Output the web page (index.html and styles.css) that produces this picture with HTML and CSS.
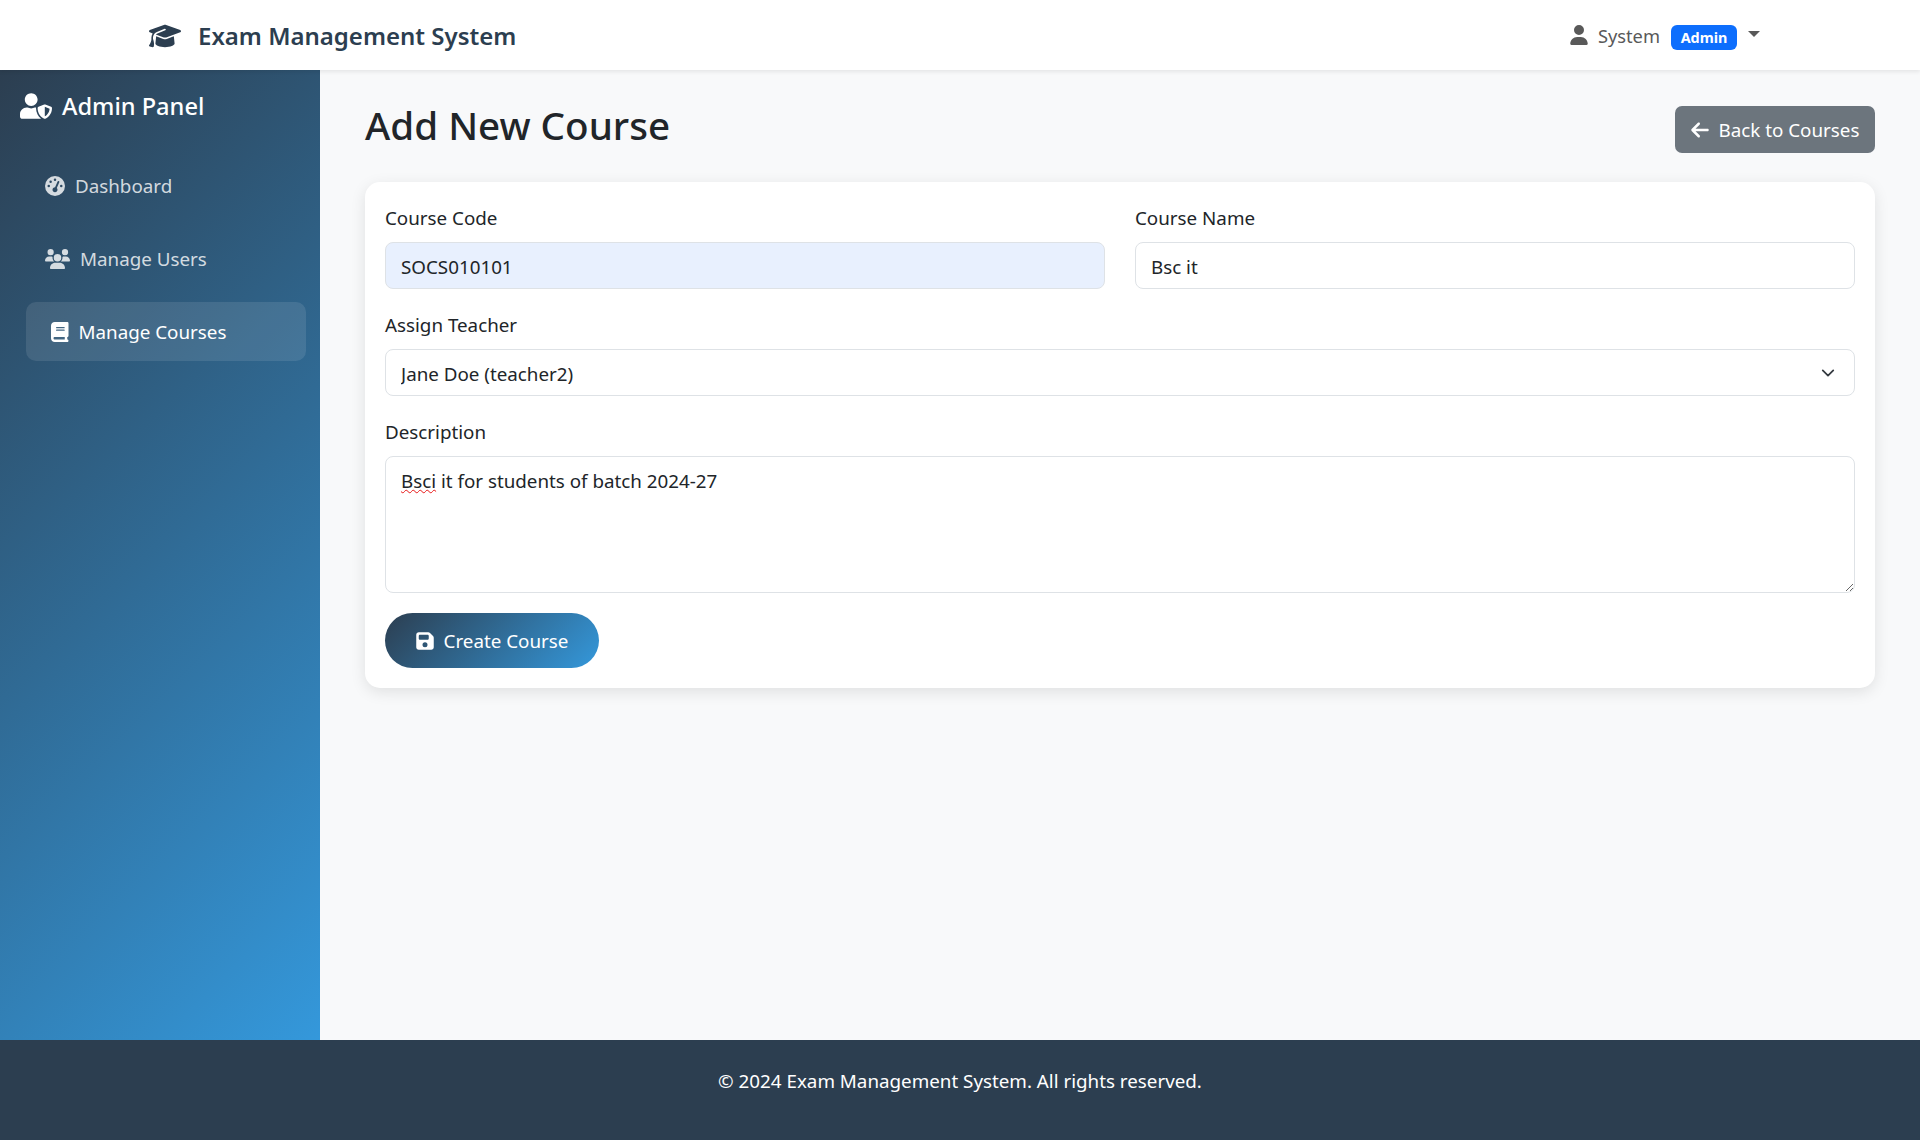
FILE: index.html
```html
<!DOCTYPE html>
<html>
  <head>
    <title>Add New Course</title>
    <link rel="stylesheet" href="styles.css">
  </head>
  <body>
    <nav class="navbar">
      <a class="brand" href="#">
        <svg class="brand-icon" viewBox="0 0 640 512"><path d="M320 32c-8.1 0-16.1 1.4-23.7 4.1L15.8 137.4C6.3 140.9 0 149.9 0 160s6.3 19.1 15.8 22.6l57.9 20.9C57.3 229.3 48 259.8 48 291.9v28.1c0 28.4-10.8 57.7-22.3 80.8c-6.5 13-13.9 25.8-22.5 37.6C0 442.7-.9 448.3 .9 453.4s6 8.9 11.2 10.2l64 16c4.2 1.1 8.7 .3 12.4-2s6.3-6.1 7.1-10.4c8.6-42.8 4.3-81.2-2.1-108.7C90.3 344.3 86 329.8 80 316.5V291.9c0-30.2 10.2-58.7 27.9-81.5c12.9-15.5 29.6-28 49.2-35.7l157-61.7c8.2-3.2 17.5 .8 20.7 9s-.8 17.5-9 20.7l-157 61.7c-12.4 4.9-23.3 12.4-32.2 21.6l159.6 57.6c7.6 2.7 15.6 4.1 23.7 4.1s16.1-1.4 23.7-4.1L624.2 182.6c9.5-3.4 15.8-12.5 15.8-22.6s-6.3-19.1-15.8-22.6L343.7 36.1C336.1 33.4 328.1 32 320 32zM128 408c0 35.3 86 72 192 72s192-36.7 192-72L496.7 262.6 354.5 314c-11.1 4-22.8 6-34.5 6s-23.5-2-34.5-6L143.3 262.6 128 408z"/></svg>
        Exam Management System
      </a>
      <div class="user-menu">
        <svg class="user-icon" viewBox="0 0 448 512"><path d="M224 256A128 128 0 1 0 224 0a128 128 0 1 0 0 256zm-45.7 48C79.8 304 0 383.8 0 482.3C0 498.7 13.3 512 29.7 512H418.3c16.4 0 29.7-13.3 29.7-29.7C448 383.8 368.2 304 269.7 304H178.3z"/></svg>
        <span class="user-name">System</span>
        <span class="badge">Admin</span>
        <span class="caret"></span>
      </div>
    </nav>

    <div class="page">
      <aside class="sidebar">
        <h4 class="sidebar-title">
          <svg class="title-icon" viewBox="0 0 640 512"><path d="M622.3 271.1l-115.2-45c-4.1-1.6-12.6-3.7-22.2 0l-115.2 45c-10.7 4.2-17.7 14-17.7 24.9 0 111.6 68.7 188.8 132.9 213.9 9.6 3.7 18 1.6 22.2 0C558.4 489.9 640 420.5 640 296c0-10.9-7-20.7-17.7-24.9zM496 462.4V273.3l95.5 37.3c-5.6 87.1-60.9 135.4-95.5 151.8zM224 256c70.7 0 128-57.3 128-128S294.7 0 224 0 96 57.3 96 128s57.3 128 128 128zm96 40c0-2.5.8-4.8 1.1-7.2-2.5-.1-4.9-.8-7.5-.8h-16.7c-22.2 10.2-46.9 16-72.9 16s-50.6-5.8-72.9-16h-16.7C60.2 288 0 348.2 0 422.4V464c0 26.5 21.5 48 48 48h352c6.8 0 13.3-1.5 19.2-4-54-42.9-99.2-116.7-99.2-212z"/></svg>
          Admin Panel
        </h4>
        <ul class="side-nav">
          <li><a class="side-link" href="#">
            <svg class="side-icon" viewBox="0 0 512 512"><path d="M0 256a256 256 0 1 1 512 0A256 256 0 1 1 0 256zM288 96a32 32 0 1 0 -64 0 32 32 0 1 0 64 0zM256 416c35.3 0 64-28.7 64-64c0-17.4-6.9-33.1-18.1-44.6L366 161.7c5.3-12.1-.2-26.3-12.3-31.6s-26.3 .2-31.6 12.3L257.9 288c-.6 0-1.3 0-1.9 0c-35.3 0-64 28.7-64 64s28.7 64 64 64zM176 144a32 32 0 1 0 -64 0 32 32 0 1 0 64 0zM96 288a32 32 0 1 0 0-64 32 32 0 1 0 0 64zm352-32a32 32 0 1 0 -64 0 32 32 0 1 0 64 0z"/></svg>
            Dashboard</a></li>
          <li><a class="side-link" href="#">
            <svg class="side-icon" viewBox="0 0 640 512"><path d="M144 0a80 80 0 1 1 0 160A80 80 0 1 1 144 0zM512 0a80 80 0 1 1 0 160A80 80 0 1 1 512 0zM0 298.7C0 239.8 47.8 192 106.7 192h42.7c15.9 0 31 3.5 44.6 9.7c-1.3 7.2-1.9 14.7-1.9 22.3c0 38.2 16.8 72.5 43.3 96c-.2 0-.4 0-.7 0H21.3C9.6 320 0 310.4 0 298.7zM405.3 320c-.2 0-.4 0-.7 0c26.6-23.5 43.3-57.8 43.3-96c0-7.6-.7-15-1.9-22.3c13.6-6.3 28.7-9.7 44.6-9.7h42.7C592.2 192 640 239.8 640 298.7c0 11.8-9.6 21.3-21.3 21.3H405.3zM224 224a96 96 0 1 1 192 0 96 96 0 1 1 -192 0zM128 485.3C128 411.7 187.7 352 261.3 352H378.7C452.3 352 512 411.7 512 485.3c0 14.7-11.9 26.7-26.7 26.7H154.7c-14.7 0-26.7-11.9-26.7-26.7z"/></svg>
            Manage Users</a></li>
          <li><a class="side-link active" href="#">
            <svg class="side-icon" viewBox="0 0 448 512"><path d="M96 0C43 0 0 43 0 96V416c0 53 43 96 96 96H384h32c17.7 0 32-14.3 32-32s-14.3-32-32-32V384c17.7 0 32-14.3 32-32V32c0-17.7-14.3-32-32-32H384 96zm0 384H352v64H96c-17.7 0-32-14.3-32-32s14.3-32 32-32zm32-240c0-8.8 7.2-16 16-16H336c8.8 0 16 7.2 16 16s-7.2 16-16 16H144c-8.8 0-16-7.2-16-16zm16 48H336c8.8 0 16 7.2 16 16s-7.2 16-16 16H144c-8.8 0-16-7.2-16-16s7.2-16 16-16z"/></svg>
            Manage Courses</a></li>
        </ul>
      </aside>

      <main class="content">
        <div class="page-head">
          <h1>Add New Course</h1>
          <a class="btn-back" href="#">
            <svg class="btn-icon" viewBox="0 0 448 512"><path d="M9.4 233.4c-12.5 12.5-12.5 32.8 0 45.3l160 160c12.5 12.5 32.8 12.5 45.3 0s12.5-32.8 0-45.3L109.2 288 416 288c17.7 0 32-14.3 32-32s-14.3-32-32-32l-306.7 0L214.6 118.6c12.5-12.5 12.5-32.8 0-45.3s-32.8-12.5-45.3 0l-160 160z"/></svg>
            Back to Courses
          </a>
        </div>

        <form class="card">
          <div class="form-row">
            <div class="field">
              <label for="code">Course Code</label>
              <input class="form-control autofilled" type="text" id="code" value="SOCS010101">
            </div>
            <div class="field">
              <label for="name">Course Name</label>
              <input class="form-control" type="text" id="name" value="Bsc it">
            </div>
          </div>
          <div class="field">
            <label for="teacher">Assign Teacher</label>
            <select class="form-control form-select" id="teacher">
              <option>Jane Doe (teacher2)</option>
            </select>
          </div>
          <div class="field">
            <label>Description</label>
            <div class="form-control description"><span class="misspelt">Bsci</span> it for students of batch 2024-27</div>
          </div>
          <button class="btn-create" type="button">
            <svg class="btn-icon" viewBox="0 0 448 512"><path d="M64 32C28.7 32 0 60.7 0 96V416c0 35.3 28.7 64 64 64H384c35.3 0 64-28.7 64-64V173.3c0-17-6.7-33.3-18.7-45.3L352 50.7C340 38.7 323.7 32 306.7 32H64zm0 96c0-17.7 14.3-32 32-32H288c17.7 0 32 14.3 32 32v64c0 17.7-14.3 32-32 32H96c-17.7 0-32-14.3-32-32V128zM224 288a64 64 0 1 1 0 128 64 64 0 1 1 0-128z"/></svg>
            Create Course
          </button>
        </form>
      </main>
    </div>

    <footer class="footer">© 2024 Exam Management System. All rights reserved.</footer>
  </body>
</html>
```

FILE: styles.css
```css
/* Exam system - add course page */
* {
  box-sizing: border-box;
}

body {
  margin: 0;
  min-height: 100vh;
  display: flex;
  flex-direction: column;
  font-family: "Noto Sans", "Open Sans", sans-serif;
  font-size: 18.8px;
  line-height: 32px;
  background-color: #f8f9fa;
  color: #212529;
}

a {
  text-decoration: none;
}

/* top bar */
.navbar {
  height: 70px;
  padding: 2px 160px 0 149px;
  display: flex;
  align-items: center;
  justify-content: space-between;
  background-color: #ffffff;
  box-shadow: 0 2px 4px rgba(0, 0, 0, 0.08);
  position: relative;
}

.brand {
  display: flex;
  align-items: center;
  gap: 17px;
  font-size: 24px;
  font-weight: 600;
  color: #2c3e50;
}

.brand-icon {
  width: 32px;
  height: 26px;
  fill: #2c3e50;
}

.user-menu {
  display: flex;
  align-items: center;
  font-size: 18.3px;
  color: #595959;
}

.user-icon {
  width: 18px;
  height: 20px;
  fill: #595959;
  margin-right: 10px;
  margin-bottom: 3px;
}

.badge {
  margin-left: 11px;
  margin-top: 3px;
  width: 66px;
  height: 25px;
  display: flex;
  align-items: center;
  justify-content: center;
  background-color: #0d6efd;
  color: #ffffff;
  border-radius: 6px;
  font-size: 14.4px;
  font-weight: 700;
}

.caret {
  margin-left: 11px;
  margin-bottom: 4px;
  border-top: 6px solid #595959;
  border-left: 6px solid transparent;
  border-right: 6px solid transparent;
}

/* sidebar + content */
.page {
  flex: 1;
  display: flex;
}

.sidebar {
  width: 320px;
  padding: 16px 19px 0 21px;
  background: linear-gradient(135deg, #2c3e50, #3498db);
  color: #ffffff;
}

.sidebar-title {
  margin: 0 0 30px -1px;
  display: flex;
  align-items: center;
  gap: 10px;
  font-size: 23.6px;
  line-height: 40px;
  font-weight: 500;
}

.title-icon {
  width: 32px;
  height: 26px;
  fill: #ffffff;
}

.side-nav {
  list-style: none;
  margin: 0;
  padding: 0;
}

.side-nav li {
  margin-bottom: 14px;
}

.side-link {
  height: 59px;
  padding: 1px 24px 0;
  display: flex;
  align-items: center;
  gap: 10px;
  border-radius: 10px;
  color: rgba(255, 255, 255, 0.8);
}

.side-link.active {
  padding-left: 25px;
  transform: translateX(5px);
  background-color: rgba(255, 255, 255, 0.1);
  color: #ffffff;
}

.side-icon {
  height: 20px;
  fill: currentColor;
}

.content {
  flex: 1;
  padding: 19px 45px 20px;
}

.page-head {
  display: flex;
  align-items: flex-start;
  justify-content: space-between;
  margin-bottom: 21px;
}

h1 {
  margin: 0;
  font-size: 38.6px;
  line-height: 72px;
  font-weight: 500;
}

.btn-back {
  margin-top: 17px;
  width: 200px;
  height: 47px;
  display: flex;
  align-items: center;
  justify-content: center;
  gap: 10px;
  background-color: #6c757d;
  color: #ffffff;
  border-radius: 7px;
}

.btn-icon {
  width: 18px;
  height: 20px;
  fill: #ffffff;
}

/* form card */
.card {
  padding: 20px;
  background-color: #ffffff;
  border-radius: 15px;
  box-shadow: 0 4px 15px rgba(0, 0, 0, 0.1);
}

.form-row {
  display: grid;
  grid-template-columns: 1fr 1fr;
  gap: 30px;
}

.field {
  margin-bottom: 20px;
}

label {
  display: block;
  margin-bottom: 8px;
}

.form-control {
  display: block;
  width: 100%;
  height: 47px;
  padding: 7px 15px 5px;
  border: 1px solid #dee2e6;
  border-radius: 8px;
  font-family: inherit;
  font-size: 18.8px;
  line-height: 26px;
  color: #212529;
  background-color: #ffffff;
}

.autofilled {
  background-color: #e8f0fe;
}

.form-select {
  appearance: none;
  background-image: url("data:image/svg+xml,%3csvg xmlns='http://www.w3.org/2000/svg' viewBox='0 0 16 16'%3e%3cpath fill='none' stroke='%23343a40' stroke-linecap='round' stroke-linejoin='round' stroke-width='2' d='m2 5 6 6 6-6'/%3e%3c/svg%3e");
  background-repeat: no-repeat;
  background-position: right 17px center;
  background-size: 18px 14px;
}

.description {
  height: 137px;
  padding-top: 11px;
  overflow: auto;
  resize: vertical;
}

.misspelt {
  text-decoration: underline wavy #e81818 1.3px;
}

.btn-create {
  width: 214px;
  height: 55px;
  display: flex;
  align-items: center;
  justify-content: center;
  gap: 10px;
  border: none;
  border-radius: 28px;
  background: linear-gradient(135deg, #2c3e50, #3498db);
  color: #ffffff;
  font-family: inherit;
  font-size: 18.8px;
}

.footer {
  height: 100px;
  padding-top: 25px;
  display: flex;
  justify-content: center;
  background-color: #2c3e50;
  color: #ffffff;
}
```
